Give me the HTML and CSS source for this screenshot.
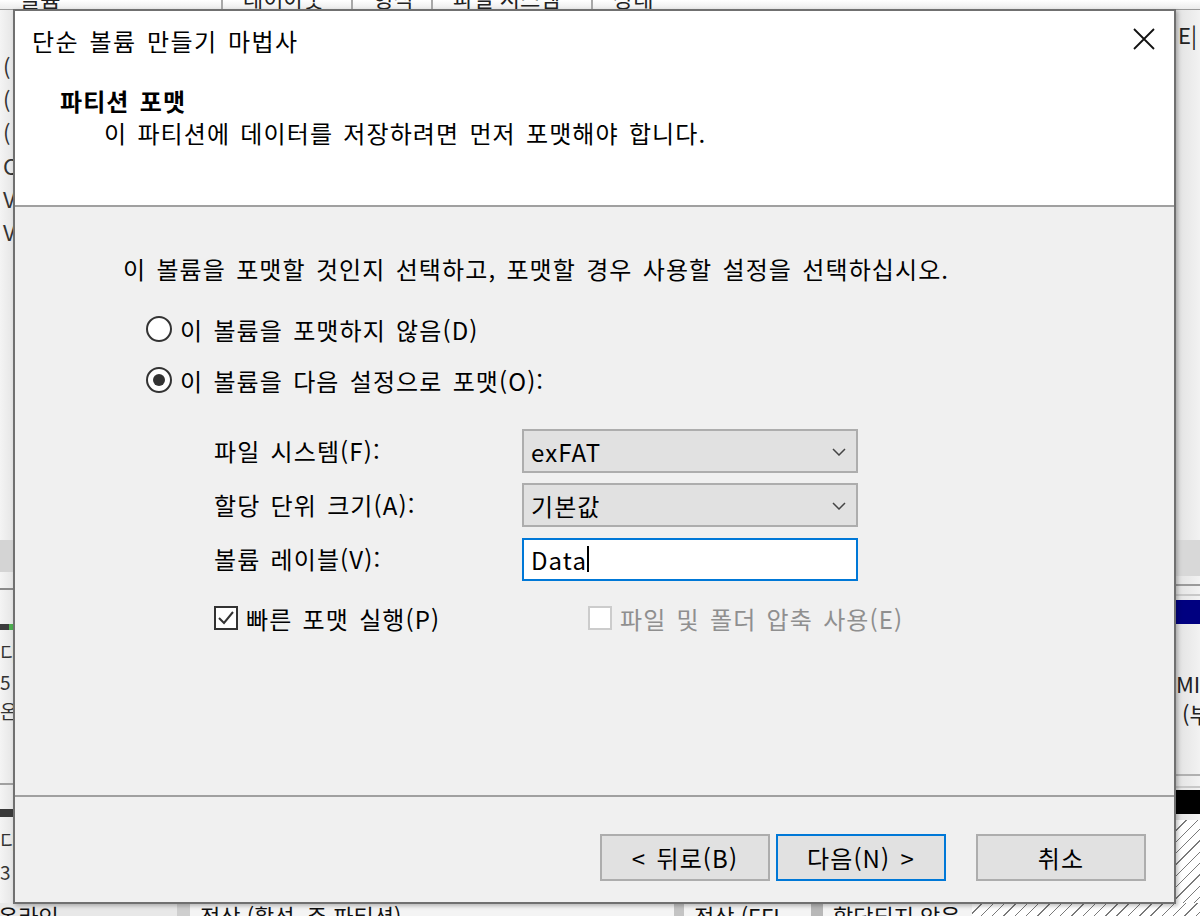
FILE: index.html
```html
<!DOCTYPE html>
<html lang="ko">
<head>
<meta charset="utf-8">
<title>단순 볼륨 만들기 마법사</title>
<link rel="stylesheet" href="styles.css">
</head>
<body>
<div class="screen">
  <div class="bg">
    <div class="bg-head">
      <div class="hc hc1"><span>볼륨</span></div>
      <div class="hc hc2"><span>레이아웃</span></div>
      <div class="hc hc3"><span>형식</span></div>
      <div class="hc hc4"><span>파일 시스템</span></div>
      <div class="hc hc5"><span>상태</span></div>
    </div>
    <div class="bg-mid">
      <div class="bg-left">
        <div class="vol-list">
          <div class="vrow">(</div>
          <div class="vrow">(</div>
          <div class="vrow">(</div>
          <div class="vrow">C</div>
          <div class="vrow">V</div>
          <div class="vrow">V</div>
        </div>
        <div class="scroll-band"></div>
        <div class="hline l1"></div>
        <div class="disk-bar green"></div>
        <div class="disk-text">
          <div>디</div>
          <div>5</div>
          <div>온</div>
        </div>
        <div class="hline l2"></div>
        <div class="disk-bar dark"></div>
        <div class="disk-text t2">
          <div>디</div>
          <div>3</div>
        </div>
      </div>
      <div class="bg-gap"></div>
      <div class="bg-right">
        <div class="r-text">E|</div>
        <div class="r-band"></div>
        <div class="r-lines"></div>
        <div class="r-navy"></div>
        <div class="r-part">
          <div>MI</div>
          <div>(부</div>
        </div>
        <div class="r-lines r2"></div>
        <div class="r-black"></div>
        <div class="hatch r-hatch"></div>
      </div>
    </div>
    <div class="bg-foot">
      <div class="fc f1"><span>온라인</span></div>
      <div class="fc f2"><span>정상 (활성, 주 파티션)</span></div>
      <div class="fc f3"><span>정상 (EFI</span></div>
      <div class="fc f4"><span>할당되지 않음</span></div>
      <div class="fc f5 hatch"></div>
    </div>
  </div>

  <div class="dialog">
    <div class="dlg-top">
      <div class="titlebar">
        <span class="title">단순 볼륨 만들기 마법사</span>
        <svg class="close" width="22" height="22" viewBox="0 0 22 22" aria-hidden="true">
          <path d="M1 1 L21 21 M21 1 L1 21" stroke="#111" stroke-width="1.8" fill="none"/>
        </svg>
      </div>
      <div class="header">
        <div class="h-title">파티션 포맷</div>
        <div class="h-sub">이 파티션에 데이터를 저장하려면 먼저 포맷해야 합니다.</div>
      </div>
    </div>

    <div class="dlg-body">
      <p class="intro">이 볼륨을 포맷할 것인지 선택하고, 포맷할 경우 사용할 설정을 선택하십시오.</p>
      <div class="radio r1"><span class="rb"></span><span>이 볼륨을 포맷하지 않음(D)</span></div>
      <div class="radio r2"><span class="rb on"></span><span>이 볼륨을 다음 설정으로 포맷(O):</span></div>

      <div class="form">
        <div class="flabel">파일 시스템(F):</div>
        <div class="combo">
          <span>exFAT</span>
          <svg class="chev" width="14" height="8" viewBox="0 0 14 8" aria-hidden="true"><path d="M1 1 L7 7 L13 1" stroke="#444" stroke-width="1.5" fill="none"/></svg>
        </div>
        <div class="flabel">할당 단위 크기(A):</div>
        <div class="combo">
          <span>기본값</span>
          <svg class="chev" width="14" height="8" viewBox="0 0 14 8" aria-hidden="true"><path d="M1 1 L7 7 L13 1" stroke="#444" stroke-width="1.5" fill="none"/></svg>
        </div>
        <div class="flabel">볼륨 레이블(V):</div>
        <div class="textbox"><span>Data</span><span class="caret"></span></div>
      </div>

      <div class="checks">
        <div class="check c-quick">
          <span class="cb">
            <svg width="20" height="20" viewBox="0 0 20 20" aria-hidden="true"><path d="M3 10 L8 15 L17 4" stroke="#333" stroke-width="2" fill="none"/></svg>
          </span>
          <span>빠른 포맷 실행(P)</span>
        </div>
        <div class="check disabled">
          <span class="cb"></span>
          <span>파일 및 폴더 압축 사용(E)</span>
        </div>
      </div>
    </div>

    <div class="dlg-foot">
      <button class="btn back">&lt; 뒤로(B)</button>
      <button class="btn next">다음(N) &gt;</button>
      <button class="btn cancel">취소</button>
    </div>
  </div>
</div>
</body>
</html>
```

FILE: styles.css
```css
* { box-sizing: border-box; }
html, body { margin: 0; padding: 0; }
body {
  width: 1200px;
  height: 916px;
  overflow: hidden;
  font-family: "Noto Sans CJK KR", "Noto Sans", sans-serif;
  font-size: 24px;
  color: #000;
  background: #f0f0f0;
}
.screen { position: relative; width: 1200px; height: 916px; overflow: hidden; }

/* ---------- background window ---------- */
.bg {
  display: grid;
  grid-template-rows: 10px 1fr 13px;
  height: 916px;
  background: #f0f0f0;
}
.bg-head { display: flex; background: linear-gradient(#ffffff, #ececec); border-bottom: 1px solid #9a9a9a; }
.hc { height: 9px; overflow: hidden; border-right: 2px solid #a8a8a8; padding-left: 20px; font-size: 22px; color: #222; }
.hc span { display: block; line-height: 24px; margin-top: -15px; white-space: nowrap; }
.hc1 { width: 223px; }
.hc2 { width: 130px; }
.hc3 { width: 80px; }
.hc4 { width: 160px; }
.hc5 { flex: 1; border-right: 0; }

.bg-mid { display: grid; grid-template-columns: 13px 1fr 24px; }
.bg-left { display: flex; flex-direction: column; overflow: hidden; background: linear-gradient(90deg, #f4f4f4, #e6e6e6); font-size: 22px; color: #333; }
.vol-list { padding-top: 40px; height: 530px; }
.vrow { height: 33px; line-height: 33px; padding-left: 3px; white-space: nowrap; }
.scroll-band { height: 32px; background: #d4d4d4; }
.hline { height: 2px; background: #8a8a8a; }
.l1 { margin-top: 16px; }
.disk-bar { height: 6px; margin-top: 34px; }
.disk-bar.green { background: #3c3c3c; box-shadow: inset -4px 0 0 #4caf50; }
.disk-bar.dark { background: #3a3a3a; margin-top: 24px; height: 8px; }
.disk-text { padding-top: 8px; font-size: 19px; }
.disk-text div { height: 29px; line-height: 29px; overflow: hidden; }
.disk-text.t2 { padding-top: 8px; }
.disk-text.t2 div { height: 31px; line-height: 31px; }
.l2 { margin-top: 58px; background: #a0a0a0; }

.bg-right { display: flex; flex-direction: column; overflow: hidden; background: linear-gradient(90deg, #e2e2e2, #f2f2f2); font-size: 22px; color: #222; }
.r-text { padding-top: 10px; height: 530px; line-height: 28px; padding-left: 2px; }
.r-band { height: 36px; background: #d8d8d8; }
.r-lines { height: 12px; margin-top: 8px; border-top: 2px solid #9a9a9a; border-bottom: 2px solid #c8c8c8; }
.r-navy { height: 24px; margin-top: 4px; background: #000080; }
.r-part { height: 150px; padding-top: 44px; line-height: 30px; white-space: nowrap; }
.r-part div:last-child { padding-left: 6px; }
.r-lines.r2 { margin-top: 0; height: 14px; border-top-color: #b0b0b0; }
.r-black { height: 24px; background: #000; margin-top: 2px; }
.hatch { background: repeating-linear-gradient(135deg, #ffffff 0 7px, #7a7a7a 7px 8px); }
.r-hatch { flex: 1; margin-top: 6px; }

.bg-foot { display: flex; background: #d8d8d8; }
.fc { height: 13px; overflow: hidden; font-size: 22px; color: #111; white-space: nowrap; }
.fc span { display: block; line-height: 24px; padding-left: 10px; }
.f1 { width: 190px; background: #e8e8e8; border-right: 13px solid #cfcfcf; }
.f1 span { padding-left: 0; margin-left: -2px; }
.f2 { width: 494px; background: #f4f4f4; border-right: 10px solid #c4c4c4; }
.f3 { width: 139px; background: #f4f4f4; border-right: 12px solid #b8b8b8; }
.f4 { width: 149px; background: #f4f4f4; }
.f5 { flex: 1; }

/* ---------- dialog ---------- */
.dialog {
  position: absolute;
  left: 13px;
  top: 9px;
  width: 1163px;
  height: 895px;
  display: flex;
  flex-direction: column;
  background: #f0f0f0;
  border: 2px solid #707070;
  box-shadow: 2px 2px 4px rgba(0, 0, 0, 0.25);
  word-spacing: 2.4px;
  letter-spacing: 1.1px;
}
.dlg-top { background: #fff; border-bottom: 2px solid #a0a0a0; }
.titlebar {
  height: 60px;
  display: flex;
  align-items: center;
  justify-content: space-between;
  padding: 0 19px 0 17px;
}
.title { line-height: 32px; letter-spacing: 1.4px; }
.close { margin-bottom: 5px; }
.header { padding: 14px 0 56px 45px; }
.h-title { font-weight: 700; line-height: 32px; }
.h-sub { padding-left: 44px; line-height: 32px; }

.dlg-body { flex: 1; padding: 46px 0 0 108px; }
.intro { margin: 0; line-height: 32px; }
.radio { display: flex; align-items: center; gap: 8px; height: 32px; margin-left: 23px; }
.radio.r1 { margin-top: 28px; }
.radio.r2 { margin-top: 19px; }
.rb {
  width: 26px;
  height: 26px;
  border-radius: 50%;
  border: 2px solid #333;
  background: #fff;
  display: flex;
  align-items: center;
  justify-content: center;
}
.rb.on::after { content: ""; width: 12px; height: 12px; border-radius: 50%; background: #333; }

.form {
  display: grid;
  grid-template-columns: 308px 336px;
  grid-auto-rows: 44px;
  row-gap: 10px;
  margin: 33px 0 0 91px;
  align-items: center;
}
.flabel { line-height: 32px; }
.combo {
  height: 44px;
  display: flex;
  align-items: center;
  justify-content: space-between;
  padding: 0 10px 0 7px;
  background: #e1e1e1;
  border: 2px solid #adadad;
}
.chev { margin-top: 1px; }
.textbox {
  height: 43px;
  display: flex;
  align-items: center;
  padding-left: 7px;
  background: #fff;
  border: 2px solid #0078d7;
}
.caret { display: block; width: 2px; height: 26px; background: #000; margin-left: 0; }

.checks { display: flex; margin: 21px 0 0 91px; }
.check { display: flex; align-items: center; gap: 8px; height: 32px; }
.c-quick { width: 374px; }
.cb {
  width: 24px;
  height: 24px;
  border: 2px solid #333;
  background: #fff;
  display: flex;
  align-items: center;
  justify-content: center;
}
.check.disabled { color: #8f8f8f; }
.check.disabled .cb { border-color: #cccccc; }

.dlg-foot {
  height: 107px;
  border-top: 2px solid #a0a0a0;
  display: flex;
  justify-content: flex-end;
  align-items: flex-start;
  padding: 37px 28px 0 0;
}
.btn {
  width: 170px;
  height: 47px;
  padding: 0;
  font-family: inherit;
  font-size: 24px;
  word-spacing: 2.4px;
  letter-spacing: 1.1px;
  color: #000;
  background: #e1e1e1;
  border: 2px solid #adadad;
}
.btn.back { margin-right: 6px; }
.btn.next { margin-right: 30px; border-color: #0078d7; }
```
